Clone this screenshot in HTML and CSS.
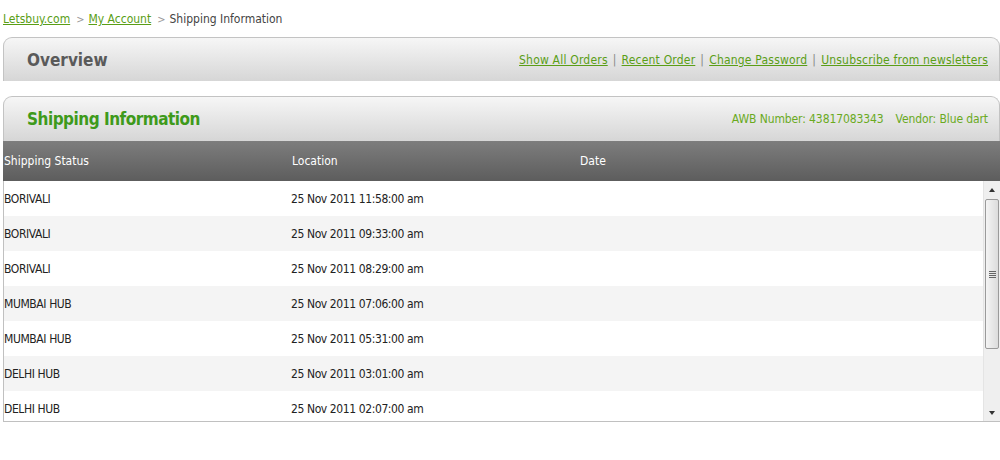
FILE: index.html
```html
<!DOCTYPE html>
<html>
<head>
<meta charset="utf-8">
<link rel="stylesheet" href="styles.css">
</head>
<body>
<div class="page">
  <div class="crumbs">
    <a href="#">Letsbuy.com</a><span class="sep">&gt;</span><a href="#">My Account</a><span class="sep">&gt;</span><span class="cur">Shipping Information</span>
  </div>

  <div class="panel overview">
    <h2 class="title grey">Overview</h2>
    <div class="links">
      <a href="#">Show All Orders</a><span class="bar">|</span><a href="#">Recent Order</a><span class="bar">|</span><a href="#">Change Password</a><span class="bar">|</span><a href="#">Unsubscribe from newsletters</a>
    </div>
  </div>

  <div class="panel ship">
    <h2 class="title green">Shipping Information</h2>
    <div class="meta"><span>AWB Number: 43817083343</span><span>Vendor: Blue dart</span></div>
  </div>
  <div class="thead">
    <div class="c1">Shipping Status</div><div class="c2">Location</div><div class="c3">Date</div>
  </div>
  <div class="tbody">
    <div class="rows">
      <div class="row"><div class="c1">BORIVALI</div><div class="c2">25 Nov 2011 11:58:00 am</div></div>
      <div class="row"><div class="c1">BORIVALI</div><div class="c2">25 Nov 2011 09:33:00 am</div></div>
      <div class="row"><div class="c1">BORIVALI</div><div class="c2">25 Nov 2011 08:29:00 am</div></div>
      <div class="row"><div class="c1">MUMBAI HUB</div><div class="c2">25 Nov 2011 07:06:00 am</div></div>
      <div class="row"><div class="c1">MUMBAI HUB</div><div class="c2">25 Nov 2011 05:31:00 am</div></div>
      <div class="row"><div class="c1">DELHI HUB</div><div class="c2">25 Nov 2011 03:01:00 am</div></div>
      <div class="row"><div class="c1">DELHI HUB</div><div class="c2">25 Nov 2011 02:07:00 am</div></div>
    </div>
    <div class="sbar">
      <div class="arrow up"></div>
      <div class="track">
        <div class="thumb"><span class="grip"></span></div>
      </div>
      <div class="arrow down"></div>
    </div>
  </div>
</div>
</body>
</html>
```
FILE: styles.css
```css
html, body { margin: 0; padding: 0; background: #fff; }
body {
  font-family: "DejaVu Sans Condensed", "DejaVu Sans", sans-serif;
  font-size: 12px;
  color: #333;
  width: 1000px;
  overflow: hidden;
}
.page { padding: 0 0 0 3px; }

.crumbs {
  height: 37px;
  line-height: 38px;
  font-size: 12px;
  color: #444;
}
.crumbs a { color: #5a9e16; text-decoration: underline; }
.crumbs .sep { color: #999; margin: 0 4px 0 6px; font-size: 11px; }
.crumbs .cur { color: #444; }

.panel {
  display: flex;
  align-items: center;
  justify-content: space-between;
  height: 44px;
  border: 1px solid #c3c3c3;
  border-bottom: none;
  border-radius: 9px 9px 0 0;
  background: linear-gradient(#f6f6f6, #d6d6d6);
  padding: 0 11px 0 23px;
  width: 997px;
  box-sizing: border-box;
}
.panel.overview { margin-bottom: 15px; }
.panel.ship { height: 45px; }

.title { margin: 0; font-size: 17px; font-weight: bold; }
.title.grey { color: #5a5a5a; }
.title.green { color: #3e9a1b; letter-spacing: -0.5px; }

.links { font-size: 12px; color: #999; padding-top: 1px; letter-spacing: 0.2px; }
.links a { color: #5a9e16; text-decoration: underline; }
.links .bar { margin: 0 5px; color: #888; }

.meta { color: #6aaa1e; font-size: 12px; display: flex; gap: 12px; letter-spacing: -0.1px; }

.thead {
  display: flex;
  height: 40px;
  align-items: center;
  background: linear-gradient(#7d7d7d, #5d5d5d);
  color: #fff;
}
.c1 { width: 288px; padding-left: 1px; }
.c2 { width: 288px; }
.c3 { flex: 1; }

.tbody {
  display: flex;
  height: 241px;
  border-left: 1px solid #c0c0c0;
  border-bottom: 1px solid #c0c0c0;
  overflow: hidden;
  box-sizing: border-box;
}
.rows { flex: 1; }
.row {
  display: flex;
  align-items: center;
  height: 35px;
  color: #222;
  letter-spacing: -0.4px;
}
.row .c1 { width: 287px; padding-left: 0; }
.row:nth-child(even) { background: #f4f4f4; }

.sbar {
  width: 16px;
  display: flex;
  flex-direction: column;
  background: #efefef;
  border-left: 1px solid #e4e4e4;
}
.arrow { height: 17px; display: flex; align-items: center; justify-content: center; }
.arrow::after {
  content: "";
  width: 0; height: 0;
  border-left: 3px solid transparent;
  border-right: 3px solid transparent;
}
.arrow.up::after { border-bottom: 4px solid #333; }
.arrow.down::after { border-top: 4px solid #333; }
.track { flex: 1; padding-top: 1px; }
.thumb {
  height: 150px;
  margin: 0 1px 0 1px;
  border: 1px solid #9a9a9a;
  border-radius: 2px;
  background: linear-gradient(90deg, #f4f4f4, #dcdcdc);
  box-sizing: border-box;
  display: flex;
  align-items: center;
  justify-content: center;
}
.grip {
  width: 7px; height: 7px;
  background: repeating-linear-gradient(#666 0 1px, transparent 1px 2px);
}
```
